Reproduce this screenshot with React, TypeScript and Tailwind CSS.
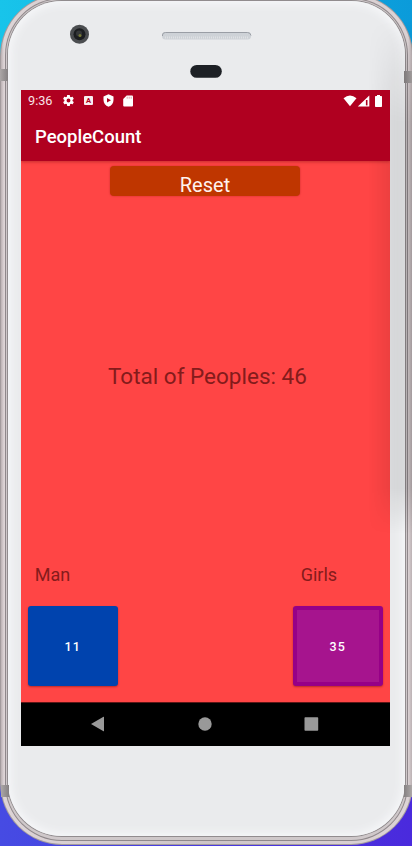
import React from "react";

function StatusBar() {
  return (
    <div className="flex h-[21px] items-center pl-[7px] pr-[7px] text-[12.7px] leading-none text-[#f8e4e8]">
      <span className="w-[34px] whitespace-nowrap pt-px">9:36</span>
      <svg className="h-[13px] w-[13px]" viewBox="0 0 24 24" fill="#fff">
        <path d="M19.4 13a7.8 7.8 0 0 0 0-2l2.1-1.6c.2-.2.3-.4.1-.7l-2-3.4c-.1-.2-.4-.3-.6-.2l-2.5 1a7 7 0 0 0-1.7-1l-.4-2.6c0-.3-.2-.5-.5-.5h-4c-.2 0-.4.2-.5.5L9 5.100a7 7 0 0 0-1.700 1l-2.500-1c-.2-.1-.5 0-.6.2l-2 3.400c-.1.3 0 .5.100.7L4.500 11a7.800 7.800 0 0 0 0 2l-2.100 1.600c-.2.2-.3.4-.1.7l2 3.400c.1.2.4.3.6.2l2.500-1a7 7 0 0 0 1.700 1l.4 2.600c0 .3.200.5.500.5h4c.2 0 .4-.2.500-.5l.4-2.600a7 7 0 0 0 1.700-1l2.500 1c.2.100.5 0 .6-.2l2-3.400c.1-.3 0-.5-.1-.7zM12 15.600a3.600 3.600 0 1 1 0-7.200 3.600 3.600 0 0 1 0 7.200z" />
      </svg>
      <span className="ml-[9px] flex h-[9px] w-[9px] items-center justify-center rounded-[1px] bg-[#f9edf0] text-[7.5px] font-bold text-[#b00020]">A</span>
      <svg className="ml-[10px] h-[13px] w-[11px]" viewBox="0 0 11 13">
        <path d="M5.500.3 10.500 2.400V6c0 3.200-2 5.700-5 6.700C2.500 11.700.5 9.200.5 6V2.400Z" fill="#fff" />
        <path d="M4 4 8 6.300 4 8.600Z" fill="#b00020" />
      </svg>
      <svg className="ml-[9px] h-[12px] w-[10px]" viewBox="0 0 10 12">
        <path d="M3.700.5H9q1 0 1 1v9q0 1-1 1H1.200q-1 0-1-1V4Z" fill="#fff" />
        <path d="M4.200 1.700v2M6.200 1.700v2M8.200 1.700v2" stroke="#d98a98" strokeWidth=".8" />
      </svg>
      <svg className="ml-auto h-[12px] w-[40px]" viewBox="0 0 40 12">
        <path d="M.5 3.200Q7-2 13.500 3.200L7 11.200Z" fill="#fff" />
        <path d="M14.800 11.500 26.300.4v11.100Z" fill="#fff" />
        <path d="M23.700 5v5.400" stroke="#b00020" strokeWidth="1.600" />
        <path d="M34 0h3v1h1.300q.7 0 .7.700v9.600q0 .7-.7.700h-5.600q-.7 0-.7-.7V1.700q0-.7.7-.7H34Z" fill="#fff" />
      </svg>
    </div>
  );
}

function Counter({ label, value, girls }: { label: string; value: number; girls?: boolean }) {
  return (
    <div className="w-[90px]">
      <div className={`h-[42px] text-[18px] leading-[22px] text-[#841b1b] ${girls ? "pl-[8px]" : "pl-[7px]"}`}>{label}</div>
      <button
        className={`flex h-[80px] w-[90px] items-center justify-center rounded-[3px] pt-[2px] text-[12.5px] font-medium tracking-[1px] text-white shadow-[0_1px_2px_rgba(80,0,0,0.4)] ${
          girls ? "border-4 border-[#960087] bg-[#a6148e]" : "bg-[#0043ae]"
        }`}
      >
        {value}
      </button>
    </div>
  );
}

function Screen() {
  return (
    <div className="relative ml-[21px] flex h-[656px] w-[369px] flex-col overflow-hidden bg-[#ff4545]">
      <header className="z-10 h-[71px] bg-[#b00020] shadow-[0_1px_3px_rgba(90,0,0,0.35)]">
        <StatusBar />
        <h1 className="pl-[14px] pt-[13px] text-[18.5px] font-medium leading-[26px] text-white">PeopleCount</h1>
      </header>
      <main className="flex h-[541px] flex-col">
        <button className="ml-[89px] mt-[5px] h-[30px] w-[190px] rounded-[4px] bg-[#bf3600] pt-[7px] text-[20px] leading-[24px] text-[#fff3ef] shadow-[0_0_2px_rgba(120,0,0,0.4)]">
          Reset
        </button>
        <p className="ml-[87px] mt-[166px] whitespace-nowrap text-[22.5px] leading-[28px] text-[#841b1b]">Total of Peoples: 46</p>
        <div className="mt-[174px] flex justify-between pl-[6.700px] pr-[7.300px]">
          <Counter label="Man" value={11} />
          <Counter label="Girls" value={35} girls />
        </div>
      </main>
      <nav className="h-[44px] border-t border-[#5c1717] bg-black">
        <svg className="h-[43px] w-[369px]" viewBox="0 0 369 43" fill="#999">
          <path d="M70 21 82.500 13.700q.5-.2.500.4v13.800q0 .6-.5.400Z" />
          <circle cx="184" cy="21" r="6.700" />
          <rect x="283.500" y="14.200" width="13.700" height="13.600" rx=".7" />
        </svg>
      </nav>
    </div>
  );
}

function Band({ className }: { className: string }) {
  return <div className={`absolute h-[12px] w-[8px] from-[#aca7a7] to-[#858182] ${className}`} />;
}

export default function App() {
  return (
    <div className="relative h-[846px] w-[412px] overflow-hidden bg-[#4a35df] font-[Roboto,sans-serif]">
      <div className="absolute inset-x-0 top-0 h-[246px] bg-[linear-gradient(90deg,#18c4ea,#0b9bda)]" />
      <div className="absolute inset-x-0 bottom-0 h-[146px] bg-[linear-gradient(90deg,#464be3,#4a2add)]" />
      <div className="absolute -top-[6px] left-0 h-[851px] w-[413px] rounded-[62px] bg-[#a39b9d] p-px">
        <div className="h-full rounded-[61px] bg-[linear-gradient(90deg,#bbb1b3_0,#ddd4d6_3px,#cdc5c7_50%,#ddd4d6_99%,#bbb1b3_100%)] px-[4px] pb-[3px] pt-[3px]">
          <div className="h-full rounded-[57px] bg-[#8f888b] p-px">
            <div className="h-full rounded-[56px] bg-[#cfc8ca] px-px pb-[3px] pt-px">
              <div className="h-full rounded-[55px] bg-[#918c8e] p-px">
                <div className="h-full rounded-[54px] bg-[#eaebed] shadow-[inset_0_0_8px_3px_#f6f7f9]" />
              </div>
            </div>
          </div>
        </div>
      </div>
      <Band className="left-0 top-[69px] bg-linear-to-r" />
      <Band className="right-0 top-[71px] bg-linear-to-l" />
      <Band className="left-[1px] top-[785px] bg-linear-to-r" />
      <Band className="right-0 top-[785px] bg-linear-to-l" />
      <div className="relative flex h-full flex-col">
        <div className="relative h-[90px] shrink-0">
          <svg className="h-[90px] w-[412px]" viewBox="0 0 412 90">
            <circle cx="79.500" cy="34.300" r="9.500" fill="#4b4d50" />
            <circle cx="79.500" cy="34.300" r="6" fill="#1b1d20" />
            <circle cx="79" cy="33.500" r="3" fill="#343638" />
            <circle cx="80" cy="35.500" r="1.500" fill="#777a35" />
            <rect x="162" y="32" width="89" height="7.500" rx="3.500" fill="#ced2d7" />
            <path d="M162.500 36v-1q0-2.500 3-2.500h82q3 0 3.500 3" fill="none" stroke="#9a9ea5" />
            <path d="M165 37.500h83" stroke="#dfe1e4" strokeWidth="2" strokeDasharray="1 1" />
            <rect x="190.300" y="65" width="31.500" height="12.800" rx="6.400" fill="#1d2025" />
          </svg>
        </div>
        <Screen />
      </div>
      <div className="pointer-events-none absolute left-[368px] top-[20px] h-[514px] w-[44px] bg-[linear-gradient(90deg,transparent,rgba(0,0,0,0.07)_50%,rgba(0,0,0,0.1)_80%,rgba(0,0,0,0.13))] [mask-image:linear-gradient(180deg,transparent,black_20%,black_91%,transparent)]" />
    </div>
  );
}
